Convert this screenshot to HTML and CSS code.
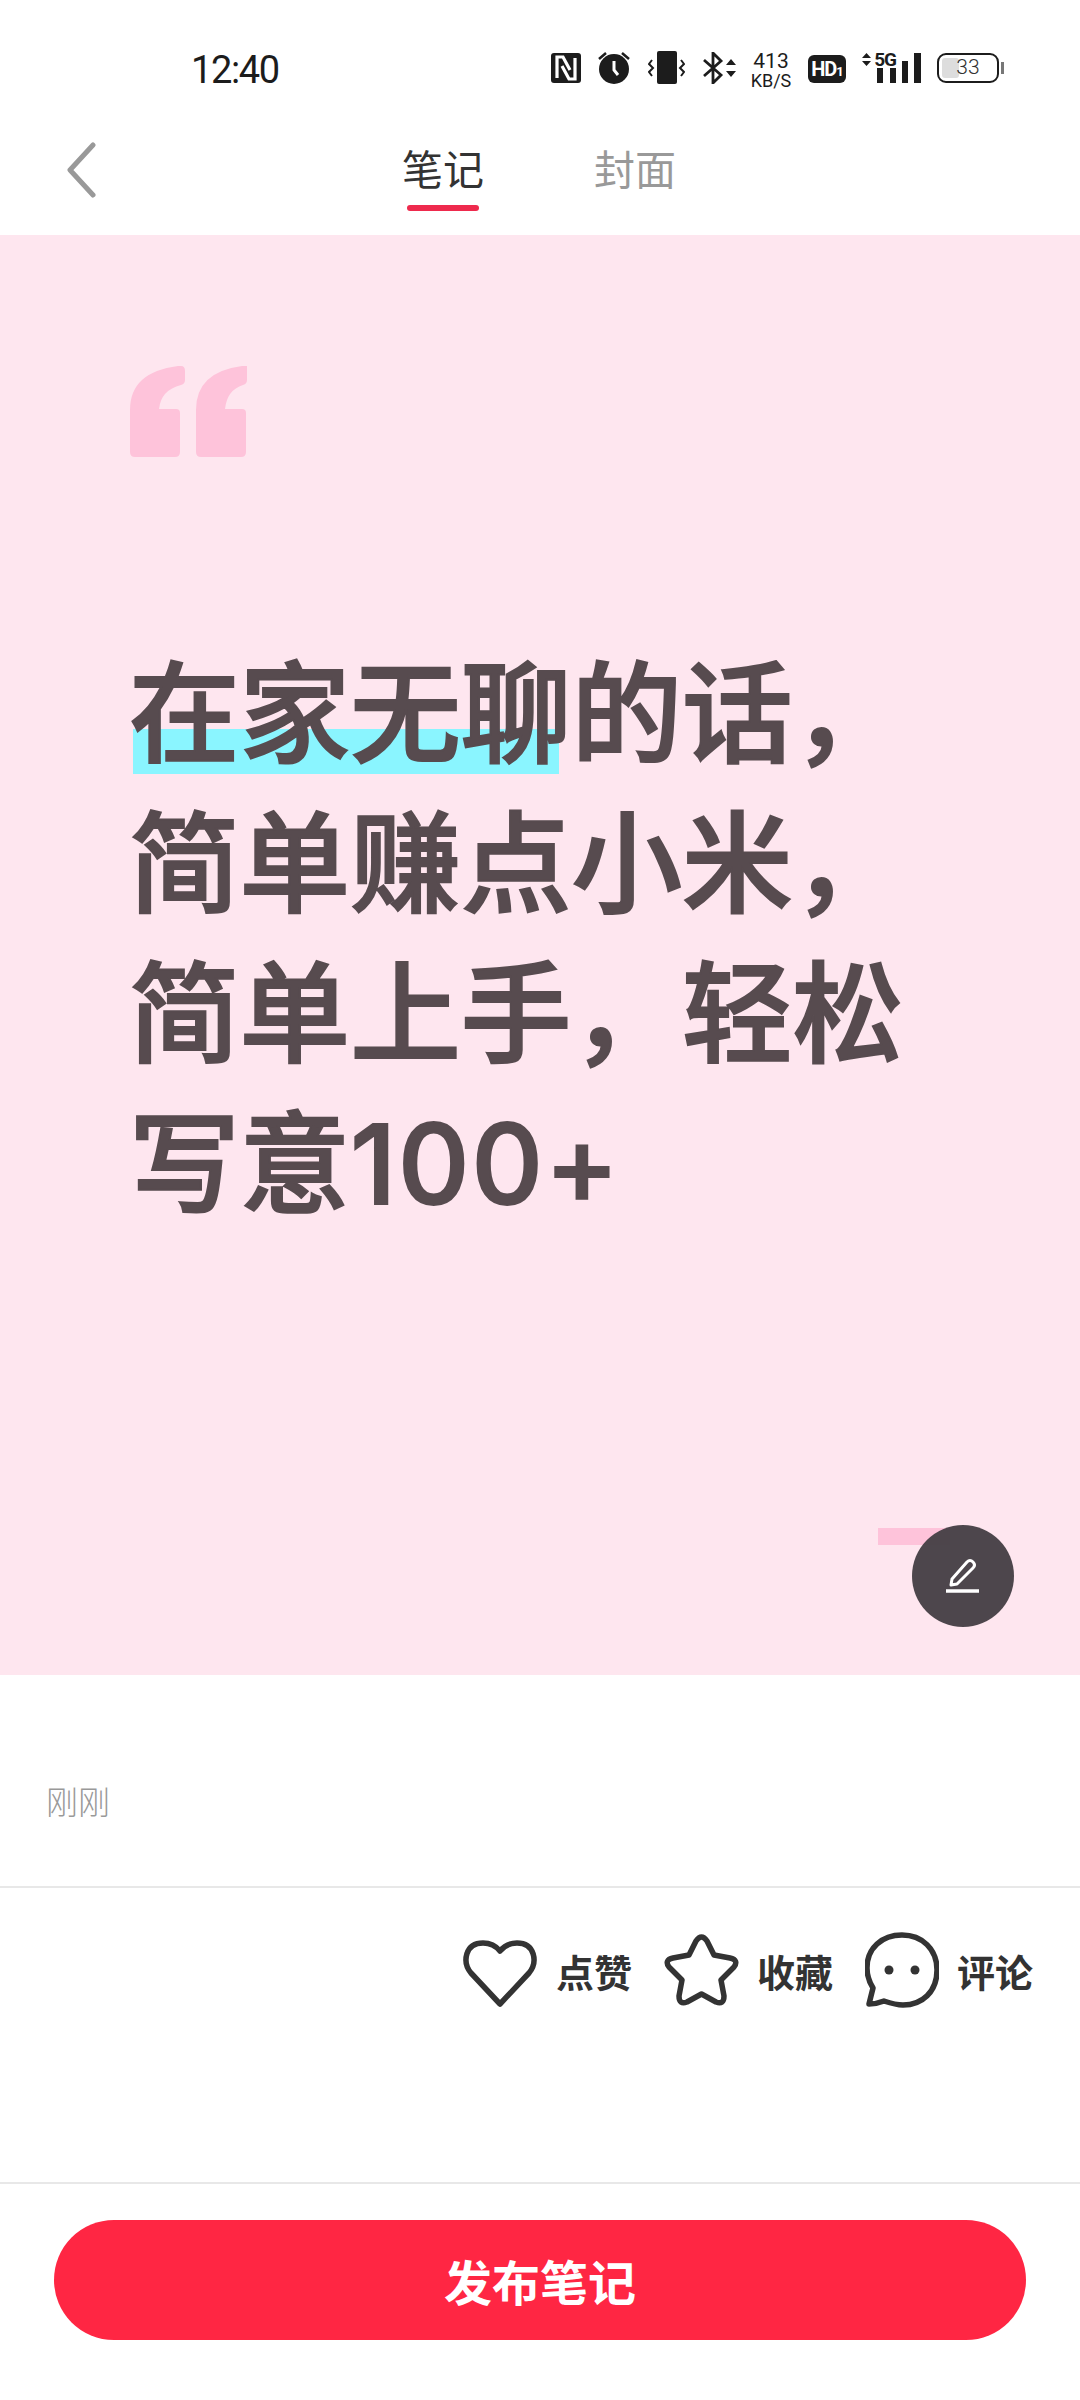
FILE: index.html
```html
<!DOCTYPE html>
<html lang="zh-CN">
<head>
    <meta charset="UTF-8">
    <meta name="viewport" content="width=device-width, initial-scale=1.0">
    <title>发布笔记</title>
    <link rel="stylesheet" href="styles.css">
</head>
<body>
    <div class="status-bar">
        <div class="clock">12:40</div>
        <div class="status-icons">
            <svg class="ic-nfc" width="30" height="30" viewBox="0 0 30 30">
                <rect width="30" height="30" rx="3" fill="#1c1c1c"/>
                <path d="M6 25V4h6l7 13M24 5v21h-6l-7-13" fill="none" stroke="#fff" stroke-width="3.200"/>
            </svg>
            <svg class="ic-alarm" width="32" height="33" viewBox="0 0 32 33">
                <circle cx="16" cy="18" r="15" fill="#1c1c1c"/>
                <path d="M16 10v9l4 5" fill="none" stroke="#fff" stroke-width="3"/>
                <path d="M1 8l7-6M31 8l-7-6" stroke="#1c1c1c" stroke-width="2.500"/>
            </svg>
            <svg class="ic-vibrate" width="37" height="33" viewBox="0 0 37 33">
                <rect x="9" width="20" height="33" rx="2" fill="#1c1c1c"/>
                <path d="M4 9L1 13l4 4-4 4 3 4M33 9l3 4-4 4 4 4-3 4" fill="none" stroke="#1c1c1c" stroke-width="2"/>
            </svg>
            <svg class="ic-bt" width="33" height="32" viewBox="0 0 33 32">
                <path d="M1 8l17 15-8 8V1l8 8L1 24" fill="none" stroke="#1c1c1c" stroke-width="2.800"/>
                <path d="M23 13l5-6 5 6zM23 19l5 6 5-6z" fill="#1c1c1c"/>
            </svg>
            <div class="net-speed">
                <span class="net-num">413</span>
                <span class="net-unit">KB/S</span>
            </div>
            <div class="hd-badge">HD<small>1</small></div>
            <div class="signal">
                <svg width="9" height="15" viewBox="0 0 9 15">
                    <path d="M0 6l4.500-5 4.500 5zM0 9l4.500 5 4.500-5z" fill="#1c1c1c"/>
                </svg>
                <div class="signal-low">
                    <span class="signal-label">5G</span>
                    <div class="signal-pair">
                        <i class="bar"></i>
                        <i class="bar"></i>
                    </div>
                </div>
                <i class="bar mid"></i>
                <i class="bar high"></i>
            </div>
            <div class="battery">
                <div class="battery-body">
                    <div class="battery-level" style="width: 33%"></div>
                    <span class="battery-num">33</span>
                </div>
                <div class="battery-nub"></div>
            </div>
        </div>
    </div>

    <div class="nav">
        <svg class="back" width="30" height="56" viewBox="0 0 30 56">
            <path d="M27 3L4 28l23 25" fill="none" stroke="#999" stroke-width="5" stroke-linecap="round" stroke-linejoin="round"/>
        </svg>
        <div class="tabs">
            <div class="tab active">笔记</div>
            <div class="tab">封面</div>
        </div>
    </div>

    <div class="cover">
        <svg class="quote" width="118" height="92" viewBox="0 0 118 92">
            <path d="M52 0Q56 0 56 5V14Q56 18 52 19Q32 24 30 43H47Q51 43 51 47V86Q51 91 46 91H6Q1 91 1 86V44Q1 6 49 0Z" fill="#fec3da"/>
            <path d="M118 0V14Q118 18 114 19Q98 24 96 43H113Q117 43 117 47V86Q117 91 112 91H72Q67 91 67 86V44Q67 6 113 0Z" fill="#fec3da"/>
        </svg>
        <div class="poster-text">
            <div><span class="mark">在家无聊</span>的话，</div>
            <div>简单赚点小米，</div>
            <div>简单上手，轻松</div>
            <div>写意<span class="num">100+</span></div>
        </div>
        <div class="corner-tag"></div>
        <div class="edit-btn">
            <svg width="36" height="36" viewBox="0 0 36 36">
                <path d="M6 27l1-6L22 4q3-3 6 0t0 6L12 26z" fill="none" stroke="#fff" stroke-width="3" stroke-linejoin="round"/>
                <path d="M1 33h33" stroke="#fff" stroke-width="3.500"/>
            </svg>
        </div>
    </div>

    <div class="meta">
        <span class="time">刚刚</span>
    </div>

    <div class="actions">
        <div class="action">
            <svg class="heart" width="76" height="68" viewBox="0 0 76 68">
                <path d="M38 64L9 33C0 22 3 3 21 3C28 3 34 6 38 11C42 6 48 3 55 3C73 3 76 22 67 33Z" fill="none" stroke="#333" stroke-width="5.500" stroke-linejoin="round"/>
            </svg>
            <span>点赞</span>
        </div>
        <div class="action">
            <svg width="75" height="72" viewBox="0 0 75 72">
                <path d="M32 7Q37.500 -1 43 7L50 21L66 24Q75 26 70 33L57 46L60 62Q60 71 52 68L37.500 60L23 68Q15 71 15 62L18 46L5 33Q0 26 9 24L25 21Z" fill="none" stroke="#333" stroke-width="5.500" stroke-linejoin="round"/>
            </svg>
            <span>收藏</span>
        </div>
        <div class="action">
            <svg width="74" height="76" viewBox="0 0 74 76">
                <path d="M4 72L8 56C3 48 2 42 2 36C2 16 17 3 37 3C57 3 72 17 72 38C72 60 57 73 38 73C31 73 25 71 19 69C14 71 9 72 4 72Z" fill="none" stroke="#333" stroke-width="5.500" stroke-linejoin="round"/>
                <circle cx="24" cy="38" r="4.500" fill="#333"/>
                <circle cx="50" cy="38" r="4.500" fill="#333"/>
            </svg>
            <span>评论</span>
        </div>
    </div>

    <div class="footer">
        <button class="publish-btn">发布笔记</button>
    </div>
</body>
</html>
```

FILE: styles.css
```css
body {
    margin: 0;
    width: 1080px;
    height: 2400px;
    overflow: hidden;
    background: #fff;
    color: #333;
    font-family: "Noto Sans CJK SC", "Noto Sans", sans-serif;
}

/* status bar */
.status-bar {
    height: 100px;
    box-sizing: border-box;
    padding: 51px 76px 0 191px;
    display: flex;
    justify-content: space-between;
    align-items: flex-start;
}

.clock {
    font-family: Roboto, sans-serif;
    font-size: 38px;
    line-height: 38px;
    letter-spacing: -1.400px;
    color: #1c1c1c;
}

.status-icons {
    display: flex;
    align-items: flex-start;
}

.ic-nfc { margin-top: 2px; }
.ic-alarm { margin-left: 17px; }
.ic-vibrate { margin-left: 18px; }
.ic-bt { margin-left: 18px; margin-top: 1px; }

.net-speed {
    margin-left: 14px;
    width: 42px;
    display: flex;
    flex-direction: column;
    align-items: center;
    font-family: Roboto, sans-serif;
    color: #1c1c1c;
}

.net-num {
    font-size: 21px;
    line-height: 20px;
}

.net-unit {
    font-size: 18px;
    line-height: 18px;
    margin-top: 1px;
}

.hd-badge {
    margin: 4px 0 0 16px;
    width: 38px;
    height: 28px;
    border-radius: 6px;
    background: #1c1c1c;
    color: #fff;
    font-family: Roboto, sans-serif;
    font-size: 20px;
    font-weight: 700;
    line-height: 28px;
    text-align: center;
    letter-spacing: -1px;
}

.hd-badge small {
    font-size: 13px;
}

.signal {
    margin: 1px 0 0 16px;
    height: 31px;
    display: flex;
    align-items: flex-end;
    gap: 6px;
}

.signal > svg {
    align-self: flex-start;
}

.signal-low {
    width: 19px;
    display: flex;
    flex-direction: column;
    align-items: flex-end;
}

.signal-label {
    font-family: Roboto, sans-serif;
    font-size: 19px;
    font-weight: 700;
    line-height: 16px;
    letter-spacing: -1px;
    white-space: nowrap;
    color: #1c1c1c;
}

.signal-pair {
    display: flex;
    gap: 7px;
}

.bar {
    display: block;
    width: 6px;
    height: 15px;
    background: #1c1c1c;
}

.bar.mid { height: 22px; }
.bar.high { height: 30px; width: 7px; }

.battery {
    margin: 2px 0 0 16px;
    display: flex;
    align-items: center;
}

.battery-body {
    position: relative;
    width: 62px;
    height: 30px;
    box-sizing: border-box;
    border: 2.500px solid #1c1c1c;
    border-radius: 9px;
    padding: 3px;
    display: flex;
}

.battery-level {
    background: #ddd;
    border-radius: 3px;
}

.battery-num {
    position: absolute;
    inset: 0;
    text-align: center;
    font-family: Roboto, sans-serif;
    font-size: 21px;
    font-weight: 300;
    line-height: 25px;
    color: #333;
}

.battery-nub {
    width: 3px;
    height: 12px;
    margin-left: 2px;
    background: #777;
}

/* top nav */
.nav {
    height: 135px;
    position: relative;
    display: flex;
    justify-content: center;
}

.back {
    position: absolute;
    left: 66px;
    top: 42px;
}

.tabs {
    display: flex;
    gap: 110px;
    margin-right: 2px;
}

.tab {
    position: relative;
    font-size: 41px;
    line-height: 60px;
    margin-top: 37px;
    color: #999;
}

.tab.active {
    color: #333;
}

.tab.active::after {
    content: "";
    position: absolute;
    left: 5px;
    right: 5px;
    top: 68px;
    height: 6px;
    border-radius: 3px;
    background: #ee2a4d;
}

/* poster */
.cover {
    position: relative;
    height: 1440px;
    box-sizing: border-box;
    padding: 131px 0 0 129px;
    background: #fee6ef;
}

.quote {
    display: block;
}

.poster-text {
    margin-top: 181px;
    font-family: Inter, "Noto Sans CJK SC", sans-serif;
    font-size: 110.600px;
    font-weight: 500;
    -webkit-text-stroke: 2px #574b4f;
    line-height: 150px;
    color: #574b4f;
    white-space: nowrap;
}

.num {
    letter-spacing: 2px;
}

.mark {
    background: linear-gradient(#8af5ff, #8af5ff) no-repeat 4px 82px / 426px 45px;
}

.corner-tag {
    position: absolute;
    left: 878px;
    top: 1293px;
    width: 72px;
    height: 17px;
    background: #fec3da;
}

.edit-btn {
    position: absolute;
    left: 912px;
    top: 1290px;
    width: 102px;
    height: 102px;
    border-radius: 50%;
    background: rgba(70, 64, 69, 0.96);
    display: flex;
    align-items: center;
    justify-content: center;
}

/* below the poster */
.meta {
    height: 213px;
    box-sizing: border-box;
    border-bottom: 2px solid #e8e8e8;
    padding: 103px 0 0 46px;
}

.time {
    font-size: 32px;
    font-weight: 300;
    line-height: 45px;
    color: #999;
}

.actions {
    height: 296px;
    box-sizing: border-box;
    border-bottom: 2px solid #e8e8e8;
    padding: 44px 47px 0 0;
    display: flex;
    justify-content: flex-end;
    gap: 32px;
}

.action {
    display: flex;
    align-items: center;
    height: 76px;
    gap: 18px;
    font-size: 38px;
    font-weight: 700;
    color: #333;
}

.heart {
    margin-top: 7px;
}

.footer {
    padding: 36px 54px 0;
}

.publish-btn {
    display: block;
    width: 100%;
    height: 120px;
    border: none;
    border-radius: 60px;
    background: #ff2643;
    color: #fff;
    font-family: inherit;
    font-size: 48px;
    font-weight: 700;
}
```
